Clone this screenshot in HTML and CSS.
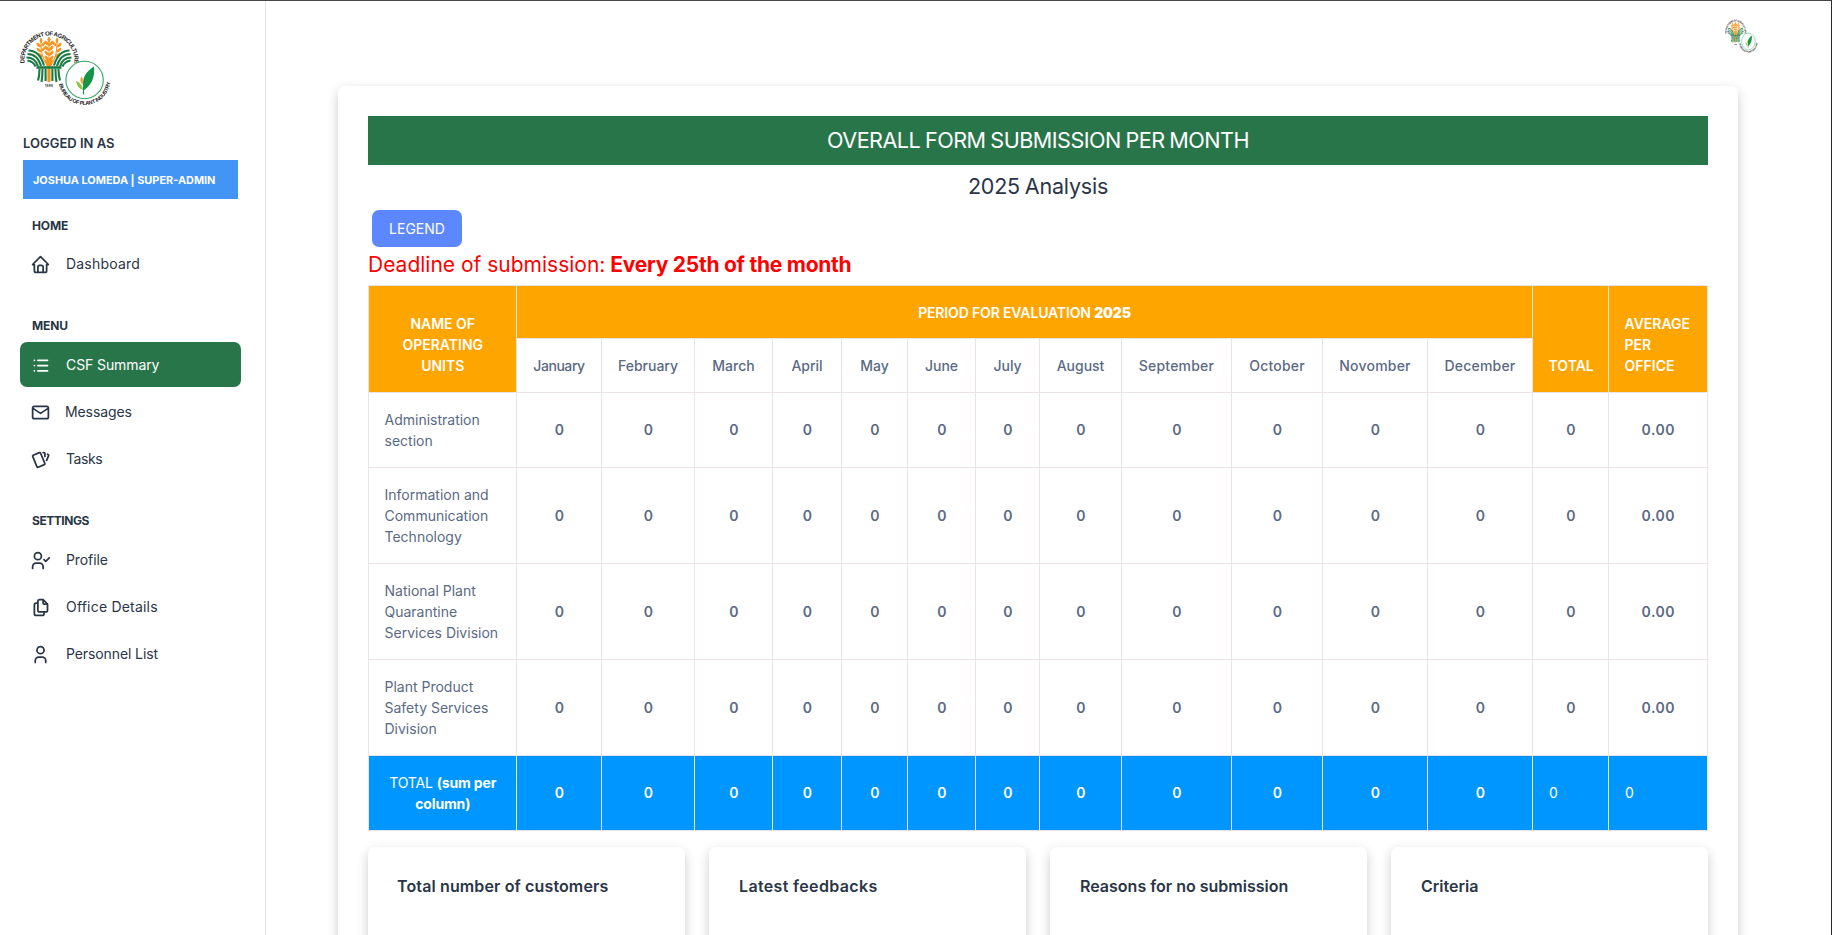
FILE: index.html
```
<!DOCTYPE html>
<html lang="en">
<head>
<meta charset="utf-8">
<title>CSF Summary</title>
<link rel="stylesheet" href="styles.css">
</head>
<body>
<svg class="defs" width="0" height="0" aria-hidden="true">
  <defs>
    <path id="arc-top" d="M24.800 65A25 25 0 1 1 74 65"/>
    <path id="arc-bottom" d="M58.600 79A26 26 0 0 0 110.600 79"/>
    <symbol id="logo" viewBox="20 30 91 78" preserveAspectRatio="none">
      <text class="seal-text seal-top"><textPath href="#arc-top" startOffset="50%">DEPARTMENT OF AGRICULTURE</textPath></text>
      <g stroke="#f7941d" stroke-width="1.1" fill="none"><path d="M49 40v42M41 42c0 12 2 18 7 24M57 42c0 12-2 18-7 24"/></g>
      <g fill="#f7941d" stroke="#f7941d" stroke-width=".9">
        <path d="M49 37q2.500 2.500 0 5q-2.500-2.500 0-5zM45 41q4 1 3.600 4.500q-4-1-3.600-4.500zM53 41q-4 1-3.600 4.500q4-1 3.600-4.500zM45 46q4 1 3.600 4.500q-4-1-3.600-4.500zM53 46q-4 1-3.600 4.500q4-1 3.600-4.500zM45 51q4 1 3.600 4.500q-4-1-3.600-4.500zM53 51q-4 1-3.600 4.500q4-1 3.600-4.500zM45 56q4 1 3.600 4.500q-4-1-3.600-4.500zM53 56q-4 1-3.600 4.500q4-1 3.600-4.500z"/>
        <path d="M41 38q2 2.500 0 5q-2-2.500 0-5zM37 43q4 1 3.600 4q-4-.5-3.600-4zM45 42q-3.500 1-3 4q3.500-1 3-4zM37 48q4 1 4 4q-4-.5-4-4zM45 47q-3 1-3 4q3.500-1 3-4zM38 53q4 1 4.500 4q-4-.5-4.500-4z"/>
        <path d="M57 38q2 2.500 0 5q-2-2.500 0-5zM61 43q-4 1-3.600 4q4-.5 3.600-4zM53 42q3.500 1 3 4q-3.500-1-3-4zM61 48q-4 1-4 4q4-.5 4-4zM60 53q-4 1-4.500 4q4-.5 4.500-4z"/>
        <path d="M45.500 60h7l-1.500 6h-4zM47.900 69h2.200v12.500h-2.200z"/>
      </g>
      <g stroke="#1b7a43" stroke-width="2.100" fill="none">
        <path d="M28.500 50.500q11 0 15.500 15M27.500 54q10 0 13.500 12M26.500 57.500q9 0 11.500 9M27.500 60.500q6 1 8 6"/>
        <path d="M69.500 50.500q-11 0-15.500 15M70.500 54q-10 0-13.500 12M71.500 57.500q-9 0-11.500 9M70.500 60.500q-6 1-8 6"/>
        <path d="M36.500 67.500h25" stroke-width="2.600"/>
        <path d="M39.500 69q0 7-1.500 11.500M42.500 69q0 7-1 13M45.600 69v12M58.500 69q0 7 1.500 11.500M55.500 69q0 7 1 13M52.400 69v12"/>
      </g>
      <text class="seal-year" x="45" y="87" textLength="8">1898</text>
      <circle cx="84.600" cy="80" r="18.700" fill="#fff" stroke="#35a768" stroke-width="1.100"/>
      <path d="M83.500 89C81 77 87 71 94 66.500C95 77 92 84 84.500 90z" fill="#149447"/>
      <path d="M83.500 94.500V87" stroke="#149447" stroke-width="1.200"/>
      <path d="M83 90Q77 88 76 81Q82 83 83 90z" fill="#8cc63f"/>
      <path d="M82.500 84.500Q78.500 81 81.500 76.500Q84.500 80 82.500 84.500z" fill="#f9a63a"/>
      <text class="seal-text seal-bottom"><textPath href="#arc-bottom" startOffset="51%">BUREAU OF PLANT INDUSTRY</textPath></text>
    </symbol>
  </defs>
</svg>

<div class="page">
  <aside class="sidebar">
    <svg class="brand"><use href="#logo"/></svg>
    <div class="logged">LOGGED IN AS</div>
    <div class="user-chip"><span>JOSHUA LOMEDA | SUPER-ADMIN</span></div>

    <div class="caption">HOME</div>
    <a class="item">
      <svg class="icon" viewBox="0 0 24 24"><path d="M5 12H3l9-9 9 9h-2M5 12v7a2 2 0 0 0 2 2h10a2 2 0 0 0 2-2v-7M9 21v-6a2 2 0 0 1 2-2h2a2 2 0 0 1 2 2v6"/></svg>
      <span class="looser">Dashboard</span></a>

    <div class="caption">MENU</div>
    <a class="item active">
      <svg class="icon" viewBox="0 0 24 24"><path d="M9 6h11M9 12h11M9 18h11M5 6v.01M5 12v.01M5 18v.01"/></svg>
      <span>CSF Summary</span></a>
    <a class="item messages">
      <svg class="icon" viewBox="0 0 24 24"><path d="M3 7a2 2 0 0 1 2-2h14a2 2 0 0 1 2 2v10a2 2 0 0 1-2 2H5a2 2 0 0 1-2-2zM3 7l9 6 9-6"/></svg>
      <span>Messages</span></a>
    <a class="item">
      <svg class="icon" viewBox="0 0 24 24"><path d="M3.604 7.197l7.138-3.109a.96.96 0 0 1 1.270.527l4.924 11.902a1 1 0 0 1-.514 1.304l-7.137 3.109a.96.96 0 0 1-1.271-.527L3.090 8.500a1 1 0 0 1 .514-1.304zM15 4h1a1 1 0 0 1 1 1v3.500M20 6c.264.112.520.217.768.315a1 1 0 0 1 .530 1.311L19 13"/></svg>
      <span class="tighter">Tasks</span></a>

    <div class="caption tight">SETTINGS</div>
    <a class="item">
      <svg class="icon" viewBox="0 0 24 24"><circle cx="9" cy="7" r="4"/><path d="M3 21v-2a4 4 0 0 1 4-4h4a4 4 0 0 1 4 4v2M16 11l2 2 4-4"/></svg>
      <span>Profile</span></a>
    <a class="item">
      <svg class="icon" viewBox="0 0 24 24"><path d="M15 3v4a1 1 0 0 0 1 1h4M18 17h-7a2 2 0 0 1-2-2V5a2 2 0 0 1 2-2h4l5 5v7a2 2 0 0 1-2 2zM16 17v2a2 2 0 0 1-2 2H7a2 2 0 0 1-2-2V9a2 2 0 0 1 2-2h2"/></svg>
      <span class="looser">Office Details</span></a>
    <a class="item">
      <svg class="icon" viewBox="0 0 24 24"><circle cx="12" cy="7" r="4"/><path d="M6 21v-2a4 4 0 0 1 4-4h4a4 4 0 0 1 4 4v2"/></svg>
      <span>Personnel List</span></a>
  </aside>

  <main class="main">
    <header class="topbar"><svg class="avatar"><use href="#logo"/></svg></header>
    <section class="panel">
      <h1 class="banner">OVERALL FORM SUBMISSION PER MONTH</h1>
      <h2 class="subtitle">2025 Analysis</h2>
      <button class="legend">LEGEND</button>
      <p class="deadline">Deadline of submission: <b>Every 25th of the month</b></p>

      <table class="summary">
        <colgroup>
          <col class="w148"><col class="w85"><col class="w93"><col class="w78"><col class="w69"><col class="w66"><col class="w68"><col class="w64"><col class="w82"><col class="w110"><col class="w91"><col class="w105"><col class="w105"><col class="w76"><col class="w99">
        </colgroup>
        <thead>
          <tr class="r53"><th class="or center" rowspan="2">NAME OF<br>OPERATING<br>UNITS</th><th class="or mid center period" colspan="12">PERIOD FOR EVALUATION <b>2025</b></th><th class="or" rowspan="2">TOTAL</th><th class="or" rowspan="2">AVERAGE<br>PER<br>OFFICE</th></tr>
          <tr class="r54 months"><th class="tighter">January</th><th>February</th><th>March</th><th>April</th><th>May</th><th>June</th><th>July</th><th>August</th><th class="looser">September</th><th class="looser">October</th><th class="looser">Novomber</th><th class="looser">December</th></tr>
        </thead>
        <tbody>
          <tr class="r75"><td>Administration<br>section</td><td>0</td><td>0</td><td>0</td><td>0</td><td>0</td><td>0</td><td>0</td><td>0</td><td>0</td><td>0</td><td>0</td><td>0</td><td>0</td><td>0.00</td></tr>
          <tr class="r96"><td>Information and<br>Communication<br>Technology</td><td>0</td><td>0</td><td>0</td><td>0</td><td>0</td><td>0</td><td>0</td><td>0</td><td>0</td><td>0</td><td>0</td><td>0</td><td>0</td><td>0.00</td></tr>
          <tr class="r96"><td>National Plant<br>Quarantine<br>Services Division</td><td>0</td><td>0</td><td>0</td><td>0</td><td>0</td><td>0</td><td>0</td><td>0</td><td>0</td><td>0</td><td>0</td><td>0</td><td>0</td><td>0.00</td></tr>
          <tr class="r96"><td>Plant Product<br>Safety Services<br>Division</td><td>0</td><td>0</td><td>0</td><td>0</td><td>0</td><td>0</td><td>0</td><td>0</td><td>0</td><td>0</td><td>0</td><td>0</td><td>0</td><td>0.00</td></tr>
          <tr class="r75 totals"><td>TOTAL <b>(sum per<br>column)</b></td><td>0</td><td>0</td><td>0</td><td>0</td><td>0</td><td>0</td><td>0</td><td>0</td><td>0</td><td>0</td><td>0</td><td>0</td><td class="plain">0</td><td class="plain">0</td></tr>
        </tbody>
      </table>

      <div class="cards">
        <div class="card card-total">Total number of customers</div>
        <div class="card card-latest">Latest feedbacks</div>
        <div class="card">Reasons for no submission</div>
        <div class="card">Criteria</div>
      </div>
    </section>
  </main>
</div>
</body>
</html>
```
FILE: styles.css
```
* { box-sizing: border-box; }
html { height: 935px; overflow: hidden; }
body {
  margin: 0;
  height: 935px;
  overflow: hidden;
  font-family: Inter, "Open Sans", sans-serif;
  font-size: 14px;
  color: #2a3547;
  background: #fff;
}
.defs { position: absolute; }
.page {
  display: flex;
  height: 935px;
  overflow: hidden;
  border-top: 1px solid #464547;
  border-right: 1px solid #2b2b2b;
}

/* Sidebar */
.sidebar {
  flex: none;
  width: 266px;
  padding: 29px 24px 0 20px;
  border-right: 1px solid #e5e5e5;
}
.brand { display: block; width: 91px; height: 78px; }
.seal-text { font-family: "Liberation Sans", sans-serif; font-weight: 700; fill: #222; text-anchor: middle; }
.seal-top { font-size: 6px; letter-spacing: -.5px; }
.seal-bottom { font-size: 5.400px; letter-spacing: -.35px; }
.seal-year { font-size: 3px; font-weight: 700; fill: #222; }
.logged {
  margin: 25px 0 0 3px;
  line-height: 20px;
  font-size: 13px;
  font-weight: 600;
}
.user-chip {
  margin: 7px 3px 0 3px;
  padding-left: 10px;
  height: 39px;
  line-height: 40px;
  font-size: 10.900px;
  font-weight: 700;
  color: #fff;
  background: #4395f5;
  white-space: nowrap;
}
.caption {
  height: 56px;
  padding: 30px 0 0 12px;
  line-height: 19px;
  font-size: 12px;
  font-weight: 700;
  letter-spacing: -.1px;
}
.caption.tight { letter-spacing: -.45px; }
.user-chip + .caption { height: 42px; padding-top: 17px; }
.item {
  display: flex;
  align-items: center;
  gap: 15.500px;
  height: 45px;
  padding: 0 0 0 9.500px;
  border-radius: 7px;
  font-size: 14px;
  letter-spacing: -.1px;
  white-space: nowrap;
}
.item + .item { margin-top: 2px; }
.item span { padding-bottom: 1px; }
.item.active { color: #fff; background: #29754a; }
.item.messages { gap: 14.500px; }
.tighter { letter-spacing: -.45px; }
.looser { letter-spacing: .2px; }
.icon {
  flex: none;
  width: 21px;
  height: 21px;
  margin-top: 2px;
  fill: none;
  stroke: currentColor;
  stroke-width: 2;
  stroke-linecap: round;
  stroke-linejoin: round;
}

/* Main area */
.main { flex: 1; padding: 0 93px 0 72px; }
.topbar { display: flex; justify-content: flex-end; height: 85px; padding: 18px 0 0; }
.avatar { width: 33px; height: 35px; margin-right: -20px; }
.panel {
  height: 1000px;
  padding: 30px;
  border-radius: 7px;
  box-shadow: 0 4px 12px rgba(0, 0, 0, .2);
}
.banner {
  margin: 0;
  height: 49px;
  line-height: 49px;
  text-align: center;
  font-size: 21.600px;
  font-weight: 400;
  letter-spacing: -.520px;
  word-spacing: -.8px;
  color: #fff;
  background: #29754a;
}
.subtitle {
  margin: 0;
  height: 45px;
  line-height: 42px;
  text-align: center;
  font-size: 21.500px;
  font-weight: 400;
  letter-spacing: -.2px;
  word-spacing: -1px;
}
.legend {
  display: block;
  width: 90px;
  height: 37px;
  margin-left: 4px;
  padding: 0;
  border: 0;
  border-radius: 7px;
  font: 14px Inter, sans-serif;
  color: #fff;
  background: #5d87ff;
}
.deadline {
  margin: 0;
  height: 38px;
  line-height: 35px;
  font-size: 21px;
  color: #f00;
  white-space: nowrap;
}
.deadline b { margin-left: -1px; letter-spacing: -.25px; }

/* Summary table */
.summary {
  width: 1340px;
  table-layout: fixed;
  border-collapse: collapse;
  line-height: 21px;
  color: #5a6a85;
}
.summary th, .summary td {
  padding: 0 15px 0 15.500px;
  border: 1px solid #eee3e4;
  font-weight: 600;
  text-align: center;
  white-space: nowrap;
}
.summary td { padding-bottom: 1px; }
.summary th { font-weight: 500; }
.summary .months th { padding: 0; }
.summary .or {
  padding-bottom: 16px;
  vertical-align: bottom;
  text-align: left;
  font-weight: 600;
  color: #fff;
  background: orange;
}
.summary .mid { padding: 0; vertical-align: middle; }
.summary .period { letter-spacing: -.15px; }
.summary .center { text-align: center; }
.summary tbody td:first-child { text-align: left; font-weight: 400; }
.summary tbody td:last-child { letter-spacing: .5px; }
.summary .totals td { padding-bottom: 1px; color: #fff; background: #0096ff; }
.summary tbody .totals td:first-child { text-align: center; letter-spacing: -.15px; }
.summary .totals .plain { padding-left: 16px; text-align: left; font-weight: 400; }
.r53 { height: 53px; }
.r54 { height: 54px; }
.r75 { height: 75px; }
.r96 { height: 96px; }
.w148 { width: 148px; }
.w85 { width: 85px; }
.w93 { width: 93px; }
.w78 { width: 78px; }
.w69 { width: 69px; }
.w66 { width: 66px; }
.w68 { width: 68px; }
.w64 { width: 64px; }
.w82 { width: 82px; }
.w110 { width: 110px; }
.w91 { width: 91px; }
.w105 { width: 105px; }
.w76 { width: 76px; }
.w99 { width: 99px; }

/* Stat cards */
.cards {
  display: grid;
  grid-template-columns: repeat(4, 1fr);
  gap: 24px;
  margin-top: 16px;
}
.card {
  height: 200px;
  padding: 29px 30px;
  border-radius: 7px;
  line-height: 20px;
  font-size: 16px;
  font-weight: 600;
  white-space: nowrap;
  box-shadow: 0 4px 12px rgba(0, 0, 0, .2);
}
.card-total { padding-left: 29px; letter-spacing: .13px; }
.card-latest { letter-spacing: .35px; }
```
